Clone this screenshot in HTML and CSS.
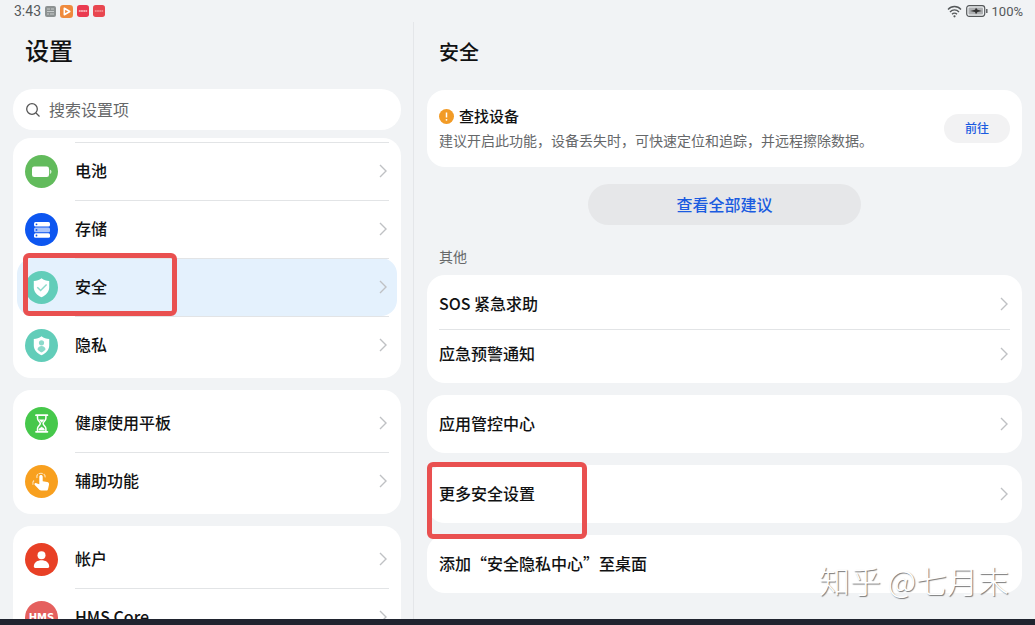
FILE: index.html
```html
<!DOCTYPE html>
<html lang="zh-CN">
<head>
  <meta charset="UTF-8">
  <meta name="viewport" content="width=device-width, initial-scale=1.0">
  <title>设置</title>
  <link rel="stylesheet" href="styles.css">
</head>
<body>
  <svg class="defs" aria-hidden="true">
    <symbol id="chevron" viewBox="0 0 12 16">
      <path d="M3 2 L9 8 L3 14" fill="none" stroke="#bfc1c4" stroke-width="1.4"/>
    </symbol>
  </svg>

  <header class="status-bar">
    <div class="status-left">
      <span>3:43</span>
      <svg width="11" height="11" viewBox="0 0 11 11"><rect width="11" height="11" rx="2" fill="#8d9292"/><path d="M2 3h3M6 3h3M2 5.500h7M2 8h2M5 8h4" stroke="#c8cccc" stroke-width="1"/></svg>
      <svg width="13" height="13" viewBox="0 0 12 12"><rect width="12" height="12" rx="3" fill="#ef8a3c"/><path d="M4 3v6l5-3z" fill="none" stroke="#fff" stroke-width="1.500" stroke-linejoin="round"/></svg>
      <svg width="12" height="12" viewBox="0 0 13 13"><rect width="13" height="13" rx="3" fill="#ea3b50"/><path d="M2 6.500h9" stroke="#fbc9cd" stroke-width="1.500" stroke-dasharray="2 .4"/></svg>
      <svg width="12" height="12" viewBox="0 0 13 13"><rect width="13" height="13" rx="3" fill="#e8464f"/><path d="M2 6.500h9" stroke="#f9bcbc" stroke-width="1.300" stroke-dasharray="2 .4"/></svg>
    </div>
    <div class="status-right">
      <svg width="15" height="13" viewBox="0 0 15 13"><g fill="none" stroke="#55585a" stroke-width="1.300"><path d="M1 4.500c3.500-4 9.500-4 13 0"/><path d="M3 7c2.500-2.800 6.500-2.800 9 0"/><path d="M5 9.300c1.400-1.500 3.600-1.500 5 0"/></g><circle cx="7.500" cy="11.300" r="1.100" fill="#55585a"/></svg>
      <svg width="22" height="12" viewBox="0 0 22 12"><rect x=".7" y=".7" width="18" height="10.600" rx="2.500" fill="#f1f3f5" stroke="#55585a" stroke-width="1.200"/><rect x="2.500" y="2.500" width="14.500" height="7" rx="1" fill="#aeb0b2"/><path d="M4 6l5-1.200 1-2 1.500 2L16 6l-4.500 1-1.500 2.300L9 7z" fill="#333"/><path d="M20.800 4v4" stroke="#55585a" stroke-width="1.400"/></svg>
      <span>100%</span>
    </div>
  </header>

  <main class="panes">
    <nav class="sidebar" aria-label="设置">
      <h1>设置</h1>
      <label class="search">
        <svg width="16" height="16" viewBox="0 0 16 16"><circle cx="7" cy="7" r="5.300" fill="none" stroke="#555" stroke-width="1.300"/><path d="M11 11l3.500 3.500" stroke="#555" stroke-width="1.300"/></svg>
        <input type="search" placeholder="搜索设置项" aria-label="搜索设置项">
      </label>

      <div class="menu">
        <ul class="card">
          <li class="lined"><a class="row" href="#battery">
            <svg class="icon" viewBox="0 0 33 33"><circle cx="16.500" cy="16.500" r="16.500" fill="#62bb5c"/><rect x="7" y="11.500" width="17" height="10.500" rx="2.200" fill="#fff"/><path d="M24.800 14.500q1.700 .3 1.700 2.200t-1.700 2.200z" fill="#d5eed3"/></svg>
            <span>电池</span><svg class="chevron"><use href="#chevron"/></svg></a></li>
          <li class="lined"><a class="row" href="#storage">
            <svg class="icon" viewBox="0 0 33 33"><circle cx="16.500" cy="16.500" r="16.500" fill="#0d56f0"/><rect x="9" y="9" width="16" height="4.600" rx="1.500" fill="#fff"/><rect x="9" y="14.600" width="16" height="4.600" rx="1.500" fill="#a9c4fb"/><rect x="9" y="20.200" width="16" height="4.600" rx="1.500" fill="#fff"/><circle cx="11.500" cy="11.300" r=".9" fill="#0d56f0"/><circle cx="11.500" cy="16.900" r=".9" fill="#0d56f0"/><circle cx="11.500" cy="22.500" r=".9" fill="#0d56f0"/></svg>
            <span>存储</span><svg class="chevron"><use href="#chevron"/></svg></a></li>
          <li class="lined selected"><a class="row" href="#security" aria-current="page">
            <svg class="icon" viewBox="0 0 33 33"><circle cx="16.500" cy="16.500" r="16.500" fill="#62cdb9"/><path d="M16.500 7.200c2.400 1.800 4.800 2.500 7.700 2.800v6.500c0 4.500-3.200 7.600-7.700 9.800-4.500-2.200-7.700-5.300-7.700-9.800V10c2.900-.3 5.300-1 7.700-2.800z" fill="#fff"/><path d="M12.300 16.200l3.300 3.300 6-6" fill="none" stroke="#8cdacb" stroke-width="1.500"/></svg>
            <span>安全</span><svg class="chevron"><use href="#chevron"/></svg></a>
            <div class="mark mark-menu"></div></li>
          <li class="lined"><a class="row" href="#privacy">
            <svg class="icon" viewBox="0 0 33 33"><circle cx="16.500" cy="16.500" r="16.500" fill="#62cdb9"/><path d="M16.500 7.200c2.400 1.800 4.800 2.500 7.700 2.800v6.500c0 4.500-3.200 7.600-7.700 9.800-4.500-2.200-7.700-5.300-7.700-9.800V10c2.900-.3 5.300-1 7.700-2.800z" fill="#fff"/><circle cx="16.500" cy="13.800" r="2.600" fill="#8cdacb"/><path d="M12.500 20.600c0-4.700 8-4.700 8 0-1.200 1.500-2.600 2.300-4 3-1.400-.7-2.800-1.500-4-3z" fill="#8cdacb"/></svg>
            <span>隐私</span><svg class="chevron"><use href="#chevron"/></svg></a></li>
        </ul>

        <ul class="card">
          <li><a class="row" href="#balance">
            <svg class="icon" viewBox="0 0 33 33"><circle cx="16.500" cy="16.500" r="16.500" fill="#46c84b"/><path d="M11 8.200h11.400M11 24.800h11.400" stroke="#fff" stroke-width="1.800" stroke-linecap="round"/><path d="M12.500 8.500v2.700c0 2.500 2.800 3.300 2.800 5.300s-2.800 2.800-2.800 5.300v2.700M20.900 8.500v2.700c0 2.500-2.800 3.300-2.800 5.300s2.800 2.800 2.800 5.300v2.700" fill="none" stroke="#fff" stroke-width="1.500"/><path d="M13.800 12.500h5.800l-2.900 3.200zM13.500 23.500c0-2.800 3.200-3 3.200-4 0 1 3.200 1.200 3.200 4z" fill="#fff"/></svg>
            <span>健康使用平板</span><svg class="chevron"><use href="#chevron"/></svg></a></li>
          <li class="lined"><a class="row" href="#accessibility">
            <svg class="icon" viewBox="0 0 33 33"><circle cx="16.500" cy="16.500" r="16.500" fill="#f8a01f"/><path d="M14.300 19.300V11.800c0-2.300 3.400-2.300 3.400 0v4.500l4.400.8c1.500.3 2.200 1.200 1.900 2.600l-1 4.600c-.2.800-.7 1.200-1.500 1.200h-5.300c-.8 0-1.300-.2-1.900-.8l-4.500-4.600c-1.100-1.200.3-2.500 1.600-1.800z" fill="#fff"/><path d="M12 13c-2-6.300 9.800-6.300 8 0" fill="none" stroke="#fde1b5" stroke-width="1.200" stroke-dasharray="4 1"/><path d="M9 15.500c-1.300 1.200-1.500 2.700-1 4.200" fill="none" stroke="#fde1b5" stroke-width="1.200"/></svg>
            <span>辅助功能</span><svg class="chevron"><use href="#chevron"/></svg></a></li>
        </ul>

        <ul class="card">
          <li><a class="row" href="#account">
            <svg class="icon" viewBox="0 0 33 33"><circle cx="16.500" cy="16.500" r="16.500" fill="#e84026"/><circle cx="16.500" cy="12.300" r="4" fill="#fff"/><path d="M8.800 23.500c0-8.200 15.400-8.200 15.400 0 0 .9-.5 1.400-1.400 1.400H10.200c-.9 0-1.400-.5-1.400-1.400z" fill="#fff"/></svg>
            <span>帐户</span><svg class="chevron"><use href="#chevron"/></svg></a></li>
          <li class="lined"><a class="row" href="#hms">
            <svg class="icon" viewBox="0 0 33 33"><circle cx="16.500" cy="16.500" r="16.500" fill="#e5605e"/><text class="hms" x="16.500" y="20" text-anchor="middle">HMS</text></svg>
            <span>HMS Core</span><svg class="chevron"><use href="#chevron"/></svg></a></li>
        </ul>
      </div>
    </nav>

    <section class="content">
      <h2>安全</h2>
      <div class="card notice">
        <div class="notice-text">
          <h3>
            <svg width="15" height="15" viewBox="0 0 15 15"><circle cx="7.500" cy="7.500" r="7.500" fill="#f29b26"/><path d="M7.500 3.500v5" stroke="#fff" stroke-width="1.500"/><circle cx="7.500" cy="10.800" r=".9" fill="#fff"/></svg>
            查找设备
          </h3>
          <p>建议开启此功能，设备丢失时，可快速定位和追踪，并远程擦除数据。</p>
        </div>
        <button class="go" type="button">前往</button>
      </div>
      <button class="view-all" type="button">查看全部建议</button>

      <h4>其他</h4>
      <div class="groups">
        <ul class="card">
          <li><a class="row" href="#sos"><span>SOS 紧急求助</span><svg class="chevron"><use href="#chevron"/></svg></a></li>
          <li class="lined"><a class="row" href="#alerts"><span>应急预警通知</span><svg class="chevron"><use href="#chevron"/></svg></a></li>
        </ul>
        <ul class="card">
          <li><a class="row" href="#apps"><span>应用管控中心</span><svg class="chevron"><use href="#chevron"/></svg></a></li>
        </ul>
        <ul class="card">
          <li><a class="row" href="#more"><span>更多安全设置</span><svg class="chevron"><use href="#chevron"/></svg></a>
            <div class="mark mark-more"></div></li>
        </ul>
        <ul class="card">
          <li><a class="row" href="#desktop"><span>添加“安全隐私中心”至桌面</span></a></li>
        </ul>
      </div>
    </section>
  </main>

  <footer class="bottom-edge"></footer>
  <div class="watermark">知乎 @七月末</div>
</body>
</html>
```

FILE: styles.css
```css
* {
  box-sizing: border-box;
}
body {
  position: relative;
  display: flex;
  flex-direction: column;
  height: 100vh;
  margin: 0;
  overflow: hidden;
  background-color: #f1f3f5;
  color: #111213;
  font-family: "Noto Sans CJK SC", sans-serif;
  font-size: 16px;
}
h1, h2, h3, h4, p, ul {
  margin: 0;
  padding: 0;
  font-weight: 500;
}
ul {
  list-style: none;
}
svg {
  flex: none;
}
.defs {
  position: absolute;
  width: 0;
  height: 0;
}

/* status bar */
.status-bar {
  display: flex;
  justify-content: space-between;
  height: 22px;
  padding: 0 12px 0 14px;
  color: #55585a;
  font-family: Roboto, sans-serif;
  font-size: 14px;
}
.status-left, .status-right {
  display: flex;
  align-items: center;
  gap: 4px;
}
.status-right {
  font-size: 13px;
}

/* two panes */
.panes {
  display: grid;
  grid-template-columns: 2fr 3fr;
  flex: 1;
  min-height: 0;
}
.sidebar {
  display: flex;
  flex-direction: column;
  min-height: 0;
  padding: 0 12px 0 13px;
  border-right: 1px solid #e4e6e9;
}
.sidebar h1 {
  padding-left: 12px;
  font-size: 24px;
  line-height: 56px;
}
.search {
  display: flex;
  align-items: center;
  gap: 8px;
  height: 41px;
  margin: 11px 0 8px;
  padding: 0 12px;
  border-radius: 20px;
  background-color: #fff;
}
.search input {
  flex: 1;
  min-width: 0;
  padding: 0 0 2px;
  border: none;
  outline: none;
  background: none;
  font: inherit;
}
.search input::placeholder {
  color: #66686a;
}
.menu {
  display: flex;
  flex-direction: column;
  gap: 12px;
  flex: 1;
  min-height: 0;
  overflow: hidden;
}

/* cards and rows */
.card {
  flex: none;
  padding: 4px 0;
  border-radius: 18px;
  background-color: #fff;
}
.card li {
  position: relative;
}
.row {
  display: flex;
  align-items: center;
  height: 50px;
  padding: 0 12px;
  color: inherit;
  text-decoration: none;
}
.menu .row {
  gap: 17px;
  height: 58px;
}
.row span {
  flex: 1;
  padding-bottom: 2px;
}
.lined .row {
  background: linear-gradient(#e2e4e6, #e2e4e6) no-repeat 12px 0 / calc(100% - 24px) 1px;
}
.menu .lined .row {
  background-position: 62px 0;
  background-size: calc(100% - 74px) 1px;
}
.selected::before {
  content: "";
  position: absolute;
  inset: 0 4px;
  border-radius: 16px;
  background-color: #e4f1fd;
}
.selected .row {
  position: relative;
}
.icon {
  width: 33px;
  height: 33px;
}
.hms {
  fill: #fff;
  font-family: "DejaVu Sans", sans-serif;
  font-size: 10px;
  font-weight: 700;
}
.chevron {
  width: 12px;
  height: 16px;
}

/* security pane */
.content {
  padding: 0 13px;
}
.content h2 {
  padding: 0 12px;
  font-size: 20px;
  line-height: 60px;
}
.notice {
  display: flex;
  align-items: center;
  justify-content: space-between;
  margin-top: 8px;
  padding: 14px 12px 15px;
}
.notice h3 {
  display: flex;
  align-items: center;
  gap: 5px;
  font-size: 15px;
  font-weight: 500;
  line-height: 24px;
}
.notice p {
  color: #66686a;
  font-size: 14px;
  font-weight: 400;
  line-height: 24px;
}
button {
  padding: 0 0 2px;
  border: none;
  color: #1a5be0;
  font-family: inherit;
  font-weight: 500;
}
.go {
  width: 66px;
  height: 29px;
  border-radius: 15px;
  background-color: #f2f2f3;
  font-size: 12px;
}
.view-all {
  display: block;
  width: 46%;
  height: 41px;
  margin: 17px auto;
  border-radius: 21px;
  background-color: #e6e7e9;
  font-size: 16px;
}
.content h4 {
  padding: 2px 12px 6px;
  color: #66686a;
  font-size: 14px;
  font-weight: 400;
  line-height: 25px;
}
.groups {
  display: flex;
  flex-direction: column;
  gap: 12px;
}

/* red marker frames */
.mark {
  position: absolute;
  z-index: 1;
  border: 5px solid #e95050;
  border-radius: 6px;
  pointer-events: none;
}
.mark-menu {
  top: -5px;
  left: 10px;
  width: 154px;
  height: 63px;
}
.mark-more {
  top: -7px;
  left: 0;
  width: 160px;
  height: 77px;
}

.bottom-edge {
  height: 6px;
  background-color: #20242f;
}
.watermark {
  position: absolute;
  right: 26px;
  bottom: 24px;
  color: #fff;
  font-size: 31px;
  font-weight: 300;
  line-height: 42px;
  text-shadow: 1px 1px 1px #777;
}
```
